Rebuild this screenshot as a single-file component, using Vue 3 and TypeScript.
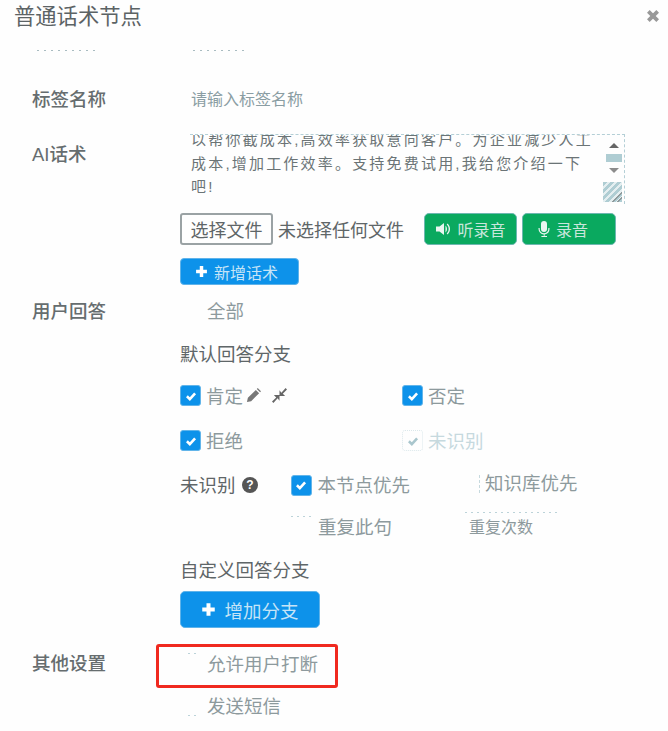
<template>
  <div class="modal">
    <header class="modal-header">
      <h3 class="modal-title">普通话术节点</h3>
      <svg class="close-icon" viewBox="0 0 12 12" aria-hidden="true">
        <path d="M2 2l8 8M10 2l-8 8" />
      </svg>
    </header>

    <!-- bottom edge of the row scrolled out under the header -->
    <div class="peek-row">
      <i class="peek-label"></i>
      <i class="peek-input"></i>
    </div>

    <div class="form-row name-row">
      <label class="row-label">标签名称</label>
      <div class="placeholder">请输入标签名称</div>
    </div>

    <div class="form-row script-row">
      <label class="row-label">AI话术</label>
      <div>
        <div class="script-box">
          <div class="script-text">
            <p v-for="line in scriptLines" :key="line">{{ line }}</p>
          </div>
          <div class="fake-scroll">
            <i class="arrow up"></i>
            <i class="thumb"></i>
            <i class="arrow down"></i>
          </div>
          <div class="resize-grip"></div>
        </div>

        <div class="file-row">
          <button class="file-btn">选择文件</button>
          <span class="file-name">未选择任何文件</span>
          <button class="btn-green">
            <svg class="btn-icon" viewBox="0 0 16 16" aria-hidden="true">
              <path d="M0 5.500h3.500L8 2v12l-4.500-3.500H0zM9.500 4.500c2 1.800 2 5.200 0 7zM11.500 2.500c3.400 2.800 3.400 8.200 0 11l-.800-1c2.600-2.400 2.600-6.600 0-9z" />
            </svg>
            听录音
          </button>
          <button class="btn-green record">
            <svg class="btn-icon" viewBox="0 0 16 16" aria-hidden="true">
              <path d="M8 0a3 3 0 0 0-3 3v5a3 3 0 0 0 6 0V3a3 3 0 0 0-3-3zM2.500 7h1.200v1a4.300 4.300 0 0 0 8.600 0V7h1.200v1a5.500 5.500 0 0 1-4.900 5.400V15h2.400v1H5.400v-1h2.400v-1.600A5.500 5.500 0 0 1 2.500 8z" />
            </svg>
            录音
          </button>
        </div>

        <button class="btn-blue small">
          <svg class="plus-icon" viewBox="0 0 12 12" aria-hidden="true"><path d="M6 1v10M1 6h10" /></svg>
          新增话术
        </button>
      </div>
    </div>

    <div class="form-row answer-row">
      <label class="row-label">用户回答</label>
      <div>
        <div class="option-line all">全部</div>
        <div class="section-title">默认回答分支</div>

        <div class="check-grid">
          <div class="check-item">
            <span class="check on"><svg viewBox="0 0 12 12" aria-hidden="true"><path d="M2.500 6.200l2.500 2.500 4.500-5" /></svg></span>
            <span class="check-text">肯定</span>
            <svg class="pencil" viewBox="0 0 16 16" aria-hidden="true">
              <path d="M1 15l1-4.500L10.500 2l3.500 3.500L5.500 14zM11.500 1l1-1 3.500 3.500-1 1z" />
            </svg>
            <svg class="compress" viewBox="0 0 16 16" aria-hidden="true">
              <path d="M14.500 0L16 1.500l-4.500 4.500L14 8.500H8V2.500l2 2.500zM1.500 16L0 14.500l4.500-4.500L2 7.500h6v6l-2-2.500z" />
            </svg>
          </div>
          <div class="check-item">
            <span class="check on"><svg viewBox="0 0 12 12" aria-hidden="true"><path d="M2.500 6.200l2.500 2.500 4.500-5" /></svg></span>
            <span class="check-text">否定</span>
          </div>
          <div class="check-item">
            <span class="check on"><svg viewBox="0 0 12 12" aria-hidden="true"><path d="M2.500 6.200l2.500 2.500 4.500-5" /></svg></span>
            <span class="check-text">拒绝</span>
          </div>
          <div class="check-item faded">
            <span class="check ghost"><svg viewBox="0 0 12 12" aria-hidden="true"><path d="M2.500 6.200l2.500 2.500 4.500-5" /></svg></span>
            <span class="check-text">未识别</span>
          </div>
        </div>

        <div class="priority-row">
          <span class="priority-label check-text">未识别</span>
          <svg class="help-icon" viewBox="0 0 16 16" aria-hidden="true">
            <circle cx="8" cy="8" r="8" />
            <text x="8" y="12" text-anchor="middle">?</text>
          </svg>
          <span class="check on priority-check"><svg viewBox="0 0 12 12" aria-hidden="true"><path d="M2.500 6.200l2.500 2.500 4.500-5" /></svg></span>
          <span class="check-text">本节点优先</span>
          <span class="kb-option check-text">知识库优先</span>
        </div>

        <div class="repeat-row">
          <i class="ghost-mark repeat-mark"></i>
          <i class="ghost-mark count-mark"></i>
          <span class="repeat-this">重复此句</span>
          <span class="repeat-count">重复次数</span>
        </div>

        <div class="section-title custom">自定义回答分支</div>
        <button class="btn-blue big">
          <svg class="plus-icon" viewBox="0 0 12 12" aria-hidden="true"><path d="M6 1v10M1 6h10" /></svg>
          增加分支
        </button>
      </div>
    </div>

    <div class="form-row other-row">
      <label class="row-label">其他设置</label>
      <div>
        <div class="highlight">
          <i class="ghost-mark interrupt-mark"></i>
          允许用户打断
        </div>
        <div class="option-line sms">
          <i class="ghost-mark sms-mark"></i>
          发送短信
        </div>
      </div>
    </div>
  </div>
</template>

<script setup lang="ts">
const scriptLines: string[] = [
  '以帮你截成本,高效率获取意向客户。为企业减少人工',
  '成本,增加工作效率。支持免费试用,我给您介绍一下',
  '吧!',
]
</script>

<style>
html,
body {
  margin: 0;
  background: #fff;
  overflow: hidden;
}
</style>

<style scoped>
.modal {
  width: 668px;
  height: 731px;
  overflow: hidden;
  position: relative;
  background: #fefefe;
  color: #5f6668;
  font-family: 'Liberation Sans', 'Noto Sans CJK SC', sans-serif;
  font-size: 18.500px;
}

.modal-header {
  height: 50px;
  position: relative;
}

.modal-title {
  margin: 0;
  padding: 3px 0 0 14px;
  font-size: 21.300px;
  font-weight: 400;
  line-height: 28px;
  color: #5c6365;
}

.close-icon {
  position: absolute;
  top: 9px;
  right: 8px;
  width: 14px;
  height: 14px;
  fill: none;
  stroke: #999;
  stroke-width: 3.200;
}

.peek-row {
  height: 3px;
  padding-left: 37px;
  display: flex;
  align-items: flex-start;
  gap: 93px;
}

.peek-label,
.peek-input {
  display: block;
  height: 1px;
  background: repeating-linear-gradient(90deg, #a9bcc1 0 2px, transparent 2px 7px);
}

.peek-label {
  width: 63px;
}

.peek-input {
  width: 56px;
}

.form-row {
  display: grid;
  grid-template-columns: 180px 1fr;
}

.row-label {
  padding-left: 32px;
  font-weight: 500;
  color: #666d6f;
}

.name-row {
  margin-top: 28px;
  line-height: 38px;
  height: 38px;
}

.placeholder {
  padding-left: 11px;
  font-size: 16px;
  color: #8a9da3;
}

.script-row {
  margin-top: 15px;
}

.script-row .row-label {
  line-height: 42px;
}

.script-box {
  position: relative;
  width: 435px;
  height: 70px;
  margin-left: 10px;
  box-sizing: border-box;
  border-top: 1px dashed #b4cfd6;
  border-right: 1px dashed #b4cfd6;
  overflow: hidden;
}

.script-text {
  margin-top: -7px;
  padding-left: 1px;
  width: 410px;
  font-size: 15px;
  letter-spacing: 2.200px;
  line-height: 23.500px;
  color: #6b7476;
}

.script-text p {
  margin: 0;
  white-space: nowrap;
}

.fake-scroll {
  position: absolute;
  top: 8px;
  right: 2px;
  width: 17px;
  display: flex;
  flex-direction: column;
  align-items: center;
  gap: 6px;
}

.arrow {
  width: 0;
  height: 0;
  border-left: 5px solid transparent;
  border-right: 5px solid transparent;
}

.arrow.up {
  border-bottom: 5px solid #666;
}

.arrow.down {
  border-top: 5px solid #8c8c8c;
}

.thumb {
  width: 16px;
  height: 8px;
  background: #afcdd3;
}

.resize-grip {
  position: absolute;
  right: 2px;
  bottom: 2px;
  width: 19px;
  height: 20px;
  background:
    linear-gradient(135deg, transparent 72%, #8f9a9c 72% 78%, transparent 78% 86%, #8f9a9c 86% 92%, transparent 92%),
    repeating-linear-gradient(135deg, #afcdd3 0 3px, #e4eef0 3px 5px);
}

.file-row {
  display: flex;
  align-items: center;
  margin-top: 9px;
  height: 32px;
}

button {
  font-family: inherit;
  cursor: pointer;
}

.file-btn {
  width: 93px;
  height: 32px;
  padding: 0;
  background: #fefefe;
  border: 2px solid #9aa2a4;
  border-radius: 3px;
  font-size: 18px;
  color: #5f6668;
}

.file-name {
  margin-left: 5px;
  width: 146px;
  font-size: 18px;
  color: #5f6668;
}

.btn-green {
  width: 93px;
  height: 32px;
  padding: 0 0 0 1px;
  display: inline-flex;
  align-items: center;
  justify-content: center;
  gap: 5px;
  border: 1px solid #6db7b0;
  border-radius: 5px;
  background: #0aa95f;
  color: #c9e6dc;
  font-size: 16px;
}

.btn-green.record {
  width: 94px;
  margin-left: 5px;
  padding: 0 14px 0 0;
  gap: 4px;
}

.btn-icon {
  width: 16px;
  height: 16px;
  fill: #e9f5f0;
}

.btn-blue {
  display: flex;
  align-items: center;
  justify-content: center;
  border: 1px solid #5fb3ea;
  background: #0d92ea;
  color: #c6e4f7;
}

.btn-blue.small {
  width: 119px;
  height: 27px;
  margin-top: 13px;
  padding: 0 6px 0 0;
  gap: 6px;
  border-radius: 4px;
  font-size: 16px;
}

.btn-blue.small .plus-icon {
  width: 13px;
  height: 13px;
}

.btn-blue.big {
  width: 140px;
  height: 37px;
  margin-top: 2px;
  padding: 0;
  gap: 8px;
  border-radius: 5px;
  font-size: 18.500px;
}

.btn-blue.big .plus-icon {
  width: 15px;
  height: 15px;
}

.plus-icon {
  fill: none;
  stroke: #fff;
  stroke-width: 3.200;
}

.answer-row {
  margin-top: 9px;
}

.answer-row .row-label {
  line-height: 36px;
}

.option-line {
  padding-left: 27px;
  color: #8d9a9d;
}

.all {
  line-height: 36px;
}

.section-title {
  margin-top: 7px;
  height: 36px;
  line-height: 36px;
  color: #5f6668;
}

.check-grid {
  display: grid;
  grid-template-columns: 222px 222px;
  grid-auto-rows: 45px;
  margin-top: 0;
}

.check-item {
  display: flex;
  align-items: center;
  color: #8d9a9d;
}

.check-text {
  margin-top: -2px;
}

.check {
  flex: none;
  width: 21px;
  height: 21px;
  margin-right: 5px;
  box-sizing: border-box;
  border-radius: 3px;
  display: inline-flex;
  align-items: center;
  justify-content: center;
}

.check svg {
  width: 14px;
  height: 14px;
  fill: none;
  stroke-width: 2.200;
}

.check.on {
  background: #0d92ea;
  border: 1px solid #62b5ea;
}

.check.on svg {
  stroke: #fff;
}

.check.ghost {
  border: 1px dotted #dbe8eb;
}

.check.ghost svg {
  stroke: #a9c6cd;
}

.faded {
  color: #c6d9de;
}

.pencil {
  width: 15px;
  height: 15px;
  margin-left: 3px;
  fill: #777;
}

.compress {
  width: 15px;
  height: 15px;
  margin-left: 11px;
  fill: #666;
}

.priority-row {
  display: flex;
  align-items: center;
  height: 44px;
  color: #8d9a9d;
}

.priority-label {
  color: #5f6668;
}

.help-icon {
  width: 16px;
  height: 16px;
  margin-left: 6px;
  fill: #555;
}

.help-icon text {
  fill: #fff;
  font-size: 12px;
  font-weight: 700;
  font-family: 'Liberation Sans', sans-serif;
}

.priority-check {
  margin-left: 33px;
  margin-right: 6px;
}

.kb-option {
  margin-left: 69px;
  padding-left: 5px;
  border-left: 1px dashed #c6d9de;
  line-height: 18px;
}

.repeat-row {
  position: relative;
  display: flex;
  height: 40px;
  line-height: 42px;
  color: #8d9a9d;
}

.repeat-this {
  margin-left: 138px;
}

.repeat-count {
  margin-left: 77px;
  font-size: 16px;
}

.ghost-mark {
  position: absolute;
  height: 1px;
  background: repeating-linear-gradient(90deg, #bcd3d9 0 2px, transparent 2px 6px);
}

.repeat-mark {
  top: 9px;
  left: 111px;
  width: 20px;
}

.count-mark {
  top: 5px;
  left: 285px;
  width: 92px;
}

.section-title.custom {
  margin-top: 6px;
}

.other-row {
  margin-top: 16px;
}

.other-row .row-label {
  line-height: 40px;
}

.highlight {
  position: relative;
  width: 182px;
  height: 44px;
  margin-left: -24px;
  box-sizing: border-box;
  padding-left: 48px;
  border: 3px solid #f0291f;
  border-radius: 3px;
  line-height: 35px;
  color: #8d9a9d;
}

.interrupt-mark {
  top: 6px;
  left: 29px;
  width: 9px;
}

.sms {
  position: relative;
  line-height: 38px;
}

.sms-mark {
  top: 27px;
  left: 8px;
  width: 10px;
}
</style>
